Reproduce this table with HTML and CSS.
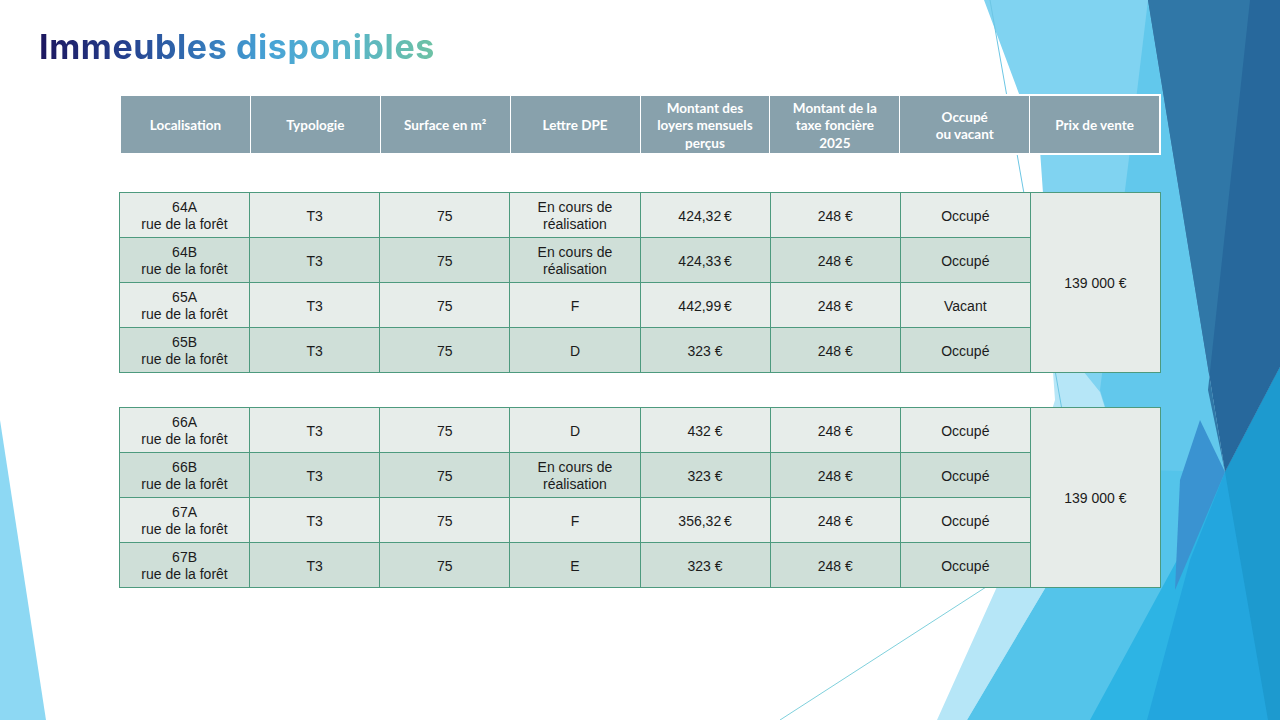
FILE: index.html
```html
<!DOCTYPE html>
<html lang="fr">
<head>
<meta charset="utf-8">
<title>Immeubles disponibles</title>
<link rel="stylesheet" href="styles.css">
</head>
<body>
<div class="slide">
  <svg class="deco" viewBox="0 0 1280 720" preserveAspectRatio="none" aria-hidden="true">
    <polygon points="0,420 46,720 0,720" fill="#8dd8f3"/>
    <polygon points="984,0 1148,0 1225,472 1160,600 1100,400 1057,395 1040,150" fill="#80d3f1"/>
    <polygon points="1130,150 1148,0 1225,472 1165,600 1100,390" fill="#62c8ec"/>
    <polygon points="1050,330 1100,392 1140,520 1050,580 967,720 937,720 1000,580 1055,400" fill="#b6e6f7"/>
    <polygon points="1140,470 1225,472 1280,367 1280,720 967,720 1050,580" fill="#54c4ea"/>
    <polygon points="1225,472 1280,367 1280,720 1090,720" fill="#2db4e4"/>
    <polygon points="1225,472 1280,367 1280,720 1147,720 1190,560" fill="#23a6de"/>
    <polygon points="1225,472 1280,367 1280,720 1268,720" fill="#1d9acf"/>
    <polygon points="1200,420 1225,472 1175,590 1180,480" fill="#3a93d1"/>
    <polygon points="1148,0 1280,0 1280,367 1225,472" fill="#27689c"/>
    <polygon points="1148,0 1250,0 1208,390 1225,472" fill="#3077a7"/>
    <line x1="990" y1="0" x2="1062" y2="410" stroke="#6cc6e4" stroke-width="1"/>
    <line x1="780" y1="720" x2="1000" y2="578" stroke="#7fd0dc" stroke-width="1"/>
  </svg>

  <div class="content">
    <h1 class="title">Immeubles disponibles</h1>

    <div class="grid head">
      <div class="h">Localisation</div>
      <div class="h">Typologie</div>
      <div class="h">Surface en m²</div>
      <div class="h">Lettre DPE</div>
      <div class="h">Montant des<br>loyers mensuels<br>perçus</div>
      <div class="h">Montant de la<br>taxe foncière<br>2025</div>
      <div class="h">Occupé<br>ou vacant</div>
      <div class="h">Prix de vente</div>
    </div>

    <div class="grid group first">
      <div class="c">64A<br>rue de la forêt</div>
      <div class="c">T3</div>
      <div class="c">75</div>
      <div class="c">En cours de<br>réalisation</div>
      <div class="c">424,32&#8239;€</div>
      <div class="c">248 €</div>
      <div class="c">Occupé</div>
      <div class="c price">139 000 €</div>

      <div class="c alt">64B<br>rue de la forêt</div>
      <div class="c alt">T3</div>
      <div class="c alt">75</div>
      <div class="c alt">En cours de<br>réalisation</div>
      <div class="c alt">424,33&#8239;€</div>
      <div class="c alt">248 €</div>
      <div class="c alt">Occupé</div>

      <div class="c">65A<br>rue de la forêt</div>
      <div class="c">T3</div>
      <div class="c">75</div>
      <div class="c">F</div>
      <div class="c">442,99&#8239;€</div>
      <div class="c">248 €</div>
      <div class="c">Vacant</div>

      <div class="c alt">65B<br>rue de la forêt</div>
      <div class="c alt">T3</div>
      <div class="c alt">75</div>
      <div class="c alt">D</div>
      <div class="c alt">323 €</div>
      <div class="c alt">248 €</div>
      <div class="c alt">Occupé</div>
    </div>

    <div class="grid group second">
      <div class="c">66A<br>rue de la forêt</div>
      <div class="c">T3</div>
      <div class="c">75</div>
      <div class="c">D</div>
      <div class="c">432 €</div>
      <div class="c">248 €</div>
      <div class="c">Occupé</div>
      <div class="c price">139 000 €</div>

      <div class="c alt">66B<br>rue de la forêt</div>
      <div class="c alt">T3</div>
      <div class="c alt">75</div>
      <div class="c alt">En cours de<br>réalisation</div>
      <div class="c alt">323 €</div>
      <div class="c alt">248 €</div>
      <div class="c alt">Occupé</div>

      <div class="c">67A<br>rue de la forêt</div>
      <div class="c">T3</div>
      <div class="c">75</div>
      <div class="c">F</div>
      <div class="c">356,32&#8239;€</div>
      <div class="c">248 €</div>
      <div class="c">Occupé</div>

      <div class="c alt">67B<br>rue de la forêt</div>
      <div class="c alt">T3</div>
      <div class="c alt">75</div>
      <div class="c alt">E</div>
      <div class="c alt">323 €</div>
      <div class="c alt">248 €</div>
      <div class="c alt">Occupé</div>
    </div>
  </div>
</div>
</body>
</html>
```

FILE: styles.css
```css
* { box-sizing: border-box; }

html, body {
  margin: 0;
  padding: 0;
  background: #ffffff;
}

.slide {
  position: relative;
  width: 1280px;
  height: 720px;
  overflow: hidden;
  background: #ffffff;
}

.deco {
  position: absolute;
  left: 0;
  top: 0;
  width: 1280px;
  height: 720px;
  z-index: 0;
}

.content {
  position: relative;
  z-index: 1;
  padding: 30px 0 0 0;
}

.title {
  margin: 0 0 30px 39px;
  font-family: "Inter", "Noto Sans", sans-serif;
  font-weight: 700;
  font-size: 34px;
  line-height: 34px;
  letter-spacing: 0.6px;
  display: inline-block;
  background: linear-gradient(90deg, #1c165e 0%, #25418f 22%, #3373b6 40%, #47a3d6 58%, #56b3cc 76%, #6ec2a4 100%);
  -webkit-background-clip: text;
  background-clip: text;
  color: transparent;
}

.grid {
  display: grid;
  grid-template-columns: repeat(8, 1fr);
  width: 1042px;
  margin-left: 119px;
}

.head {
  background: #ffffff;
  border: 2px solid #ffffff;
  gap: 1px;
  height: 61px;
}

.h {
  background: #88a1ac;
  color: #ffffff;
  font-family: "Lato", "Open Sans", sans-serif;
  font-weight: 700;
  font-size: 13.5px;
  line-height: 17.5px;
  text-align: center;
  display: flex;
  align-items: center;
  justify-content: center;
  padding: 3px 4px 0 4px;
}

.group {
  background: #4d9a7e;
  border: 1px solid #4d9a7e;
  gap: 1px;
  grid-template-rows: repeat(4, 44px);
}

.first { margin-top: 37px; }
.second { margin-top: 34px; }

.c {
  background: #e7edea;
  color: #1b1b1b;
  font-family: "Liberation Sans", "Arial", sans-serif;
  font-size: 14px;
  line-height: 17px;
  text-align: center;
  display: flex;
  align-items: center;
  justify-content: center;
  padding-top: 2px;
}

.c.alt {
  background: #cfdfd8;
}

.c.price {
  grid-column: 8;
  grid-row: 1 / span 4;
  background: #e7ece9;
}
```
